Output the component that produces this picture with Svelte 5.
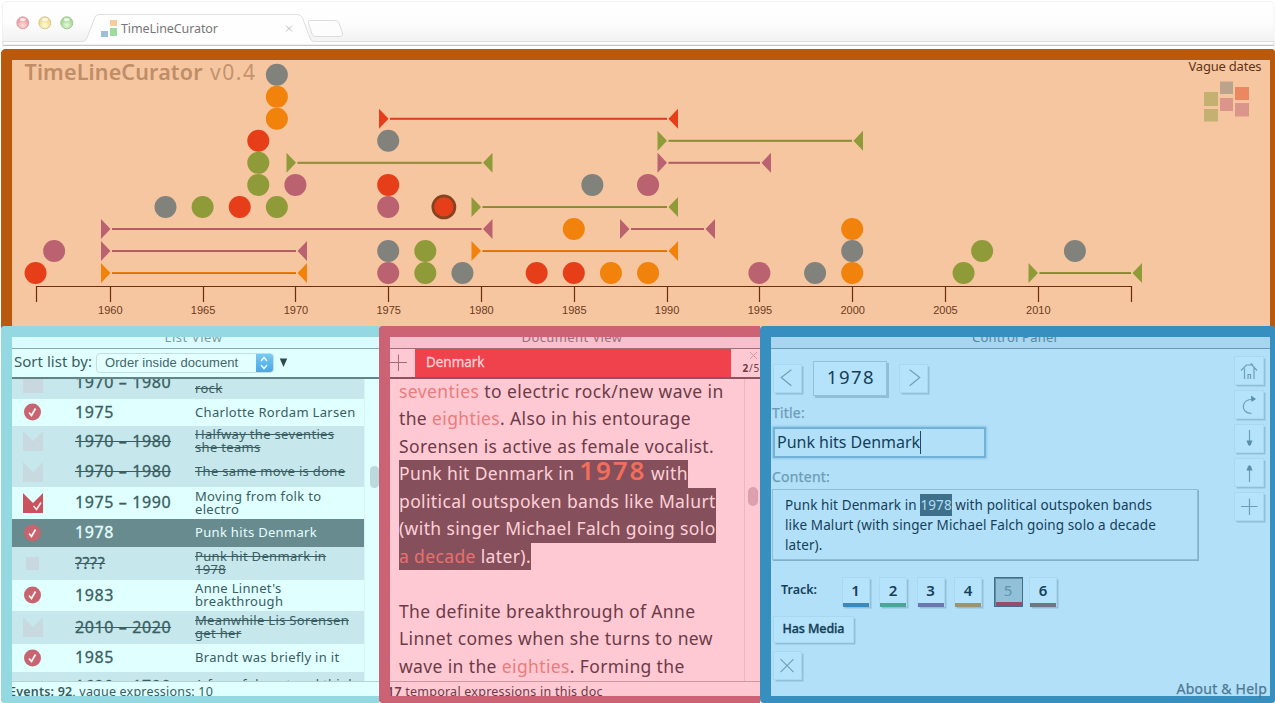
<script>
  const colors = { red: '#e63e19', green: '#8f9a38', gray: '#82827c', mauve: '#bb6270', orange: '#f1820b' };
  const rowY = (r) => 273 - r * 22.03;
  const yearX = (y) => 109.8 + (y - 1960) * 18.56;

  const events = [
    [1956, 0, 'red'], [1975, 0, 'mauve'], [1977, 0, 'green'], [1979, 0, 'gray'], [1983, 0, 'red'],
    [1985, 0, 'red'], [1987, 0, 'orange'], [1989, 0, 'orange'], [1995, 0, 'mauve'], [1998, 0, 'gray'],
    [2000, 0, 'orange'], [2006, 0, 'green'],
    [1957, 1, 'mauve'], [1975, 1, 'gray'], [1977, 1, 'green'], [2000, 1, 'gray'], [2007, 1, 'green'], [2012, 1, 'gray'],
    [1985, 2, 'orange'], [2000, 2, 'orange'],
    [1963, 3, 'gray'], [1965, 3, 'green'], [1967, 3, 'red'], [1969, 3, 'green'], [1975, 3, 'mauve'], [1978, 3, 'red', true],
    [1968, 4, 'green'], [1970, 4, 'mauve'], [1975, 4, 'red'], [1986, 4, 'gray'], [1989, 4, 'mauve'],
    [1968, 5, 'green'],
    [1968, 6, 'red'], [1975, 6, 'gray'],
    [1969, 7, 'orange'], [1969, 8, 'orange'], [1969, 9, 'gray']
  ];
  const spans = [
    [101, 307, 0, 'orange'], [1028.5, 1142, 0, 'green'],
    [101, 307, 1, 'mauve'], [471.5, 678, 1, 'orange'],
    [101, 492.5, 2, 'mauve'], [620, 715, 2, 'mauve'],
    [471.5, 678, 3, 'green'],
    [286.5, 492.5, 5, 'green'], [657.5, 771, 5, 'mauve'],
    [657.5, 863, 6, 'green'],
    [379, 678, 7, 'red']
  ];
  const ticks = [1960, 1965, 1970, 1975, 1980, 1985, 1990, 1995, 2000, 2005, 2010];

  const rows = [
    { h: 20, icon: 'sq', off: true, date: '1970 – 1980', title: ['rock'], first: true },
    { h: 27, icon: 'dot', date: '1975', title: ['Charlotte Rordam Larsen'] },
    { h: 31, icon: 'flag', off: true, date: '1970 – 1980', title: ['Halfway the seventies', 'she teams'] },
    { h: 30, icon: 'flag', off: true, date: '1970 – 1980', title: ['The same move is done'] },
    { h: 32, icon: 'flag', date: '1975 – 1990', title: ['Moving from folk to', 'electro'] },
    { h: 28, icon: 'dot', date: '1978', title: ['Punk hits Denmark'], sel: true },
    { h: 33, icon: 'small', off: true, date: '????', title: ['Punk hit Denmark in', '1978'] },
    { h: 31, icon: 'dot', date: '1983', title: ["Anne Linnet's", 'breakthrough'] },
    { h: 33, icon: 'flag', off: true, date: '2010 – 2020', title: ['Meanwhile Lis Sorensen', 'get her'] },
    { h: 28, icon: 'dot', date: '1985', title: ['Brandt was briefly in it'] },
    { h: 28, icon: 'flag', off: true, date: '1690 – 1790', title: ['A few of desert and think'], last: true }
  ];
  const tracks = ['#3b88b9', '#4ca596', '#6a78ae', '#9b946e', '#964d6d', '#6b7882'];
  const tools = ['home', 'redo', 'down', 'up', 'plus'];
</script>

<div class="page">
  <header class="chrome">
    <svg width="1275" height="49" viewBox="0 0 1275 49">
      <defs>
        <linearGradient id="bar" x1="0" y1="0" x2="0" y2="1"><stop offset="0" stop-color="#fff" /><stop offset=".45" stop-color="#fdfdfd" /><stop offset="1" stop-color="#ededed" /></linearGradient>
        <radialGradient id="r" cy=".7"><stop offset="0" stop-color="#fde3e3" /><stop offset="1" stop-color="#ee9ba0" /></radialGradient>
        <radialGradient id="y" cy=".7"><stop offset="0" stop-color="#fffbd6" /><stop offset="1" stop-color="#eedc91" /></radialGradient>
        <radialGradient id="g" cy=".7"><stop offset="0" stop-color="#e4fadb" /><stop offset="1" stop-color="#a5d893" /></radialGradient>
      </defs>
      <path d="M2.500 49V6Q2.500 1.500 7 1.500H1270Q1274 1.500 1274 6V41H2.500Z" fill="url(#bar)" />
      <path d="M2.500 49V6Q2.500 1.500 7 1.500H1270Q1274 1.500 1274 6V49" fill="none" stroke="#f2f2f2" />
      <path d="M3 41.500H83Q86 41 87 38L95 17Q96 14.500 99 14.500H297Q301 14.500 302.500 18L310 38Q311 41.500 314 41.500H1274V45H3Z" fill="#fefefe" stroke="#dfdfdf" />
      <path d="M3 45.500H1274" stroke="#c6c8ca" />
      <circle cx="22.800" cy="22.800" r="6" fill="url(#r)" stroke="#d9a6a8" />
      <circle cx="44.800" cy="22.800" r="6" fill="url(#y)" stroke="#d3c797" />
      <circle cx="66.800" cy="22.800" r="6" fill="url(#g)" stroke="#a4c898" />
      <g fill="#fff" opacity=".8"><ellipse cx="22.800" cy="19.500" rx="3" ry="1.500" /><ellipse cx="44.800" cy="19.500" rx="3" ry="1.500" /><ellipse cx="66.800" cy="19.500" rx="3" ry="1.500" /></g>
      <path fill="#f5cc9d" d="M110 20h7v6h-7z" /><path fill="#9ddc9f" d="M110 28h7v8h-7z" /><path fill="#9dc0d4" d="M101 31h7v6h-7z" />
      <text x="121" y="33" class="tabtext" textLength="97">TimeLineCurator</text>
      <path d="M286 25.500l6 6M292 25.500l-6 6" stroke="#bdbdbd" />
      <path d="M310 20.500H335Q338 20.500 339 23L342.500 33Q343 36.500 340 36.500H316Q313 36.500 312 34L308.500 23Q308 20.500 310 20.500Z" fill="#fdfdfd" stroke="#dcdcdc" />
    </svg>
  </header>

  <section class="timeline">
    <svg width="1258" height="266" viewBox="12 60 1258 266">
      <text x="24.500" y="80" class="brand" textLength="178">TimeLineCurator</text>
      <text x="210" y="80" class="version" textLength="45">v0.4</text>
      <text x="1188.500" y="71" class="vague" textLength="73">Vague dates</text>
      <g>
        <path fill="#c4b071" d="M1204 92h14v14h-14zM1204 109h14v12.500h-14z" />
        <path fill="#bca48c" d="M1220 81.500h13v12.500h-13z" />
        <path fill="#eb8861" d="M1235 87h14v13h-14z" />
        <path fill="#dc958a" d="M1220 98h13v13h-13zM1235 103h14v13.500h-14z" />
      </g>
      <path d="M36.500 302V286.500H1131.500V302" class="axis" />
      {#each ticks as t}
        <path d="M{Math.round(yearX(t)) + 0.5} 286V302" class="axis" />
        <text x={yearX(t) + 0.5} y="314" class="tick" text-anchor="middle">{t}</text>
      {/each}
      {#each spans as [a, b, r, c]}
        <path d="M{a + 11} {rowY(r)}H{b - 11}" stroke={colors[c]} stroke-width="2" />
        <path d="M{a + 11} {rowY(r) + 0.3}H{b - 11}" stroke="#8f5138" stroke-width="1" opacity=".4" />
        <path d="M{a} {rowY(r) - 10}L{a + 9.500} {rowY(r)}L{a} {rowY(r) + 10}ZM{b} {rowY(r) - 10}L{b - 9.500} {rowY(r)}L{b} {rowY(r) + 10}Z" fill={colors[c]} />
      {/each}
      {#each events as [y, r, c, sel]}
        <circle cx={yearX(y)} cy={rowY(r)} r="11" fill={colors[c]} stroke={sel ? '#864321' : 'none'} stroke-width="2.800" />
      {/each}
    </svg>
  </section>

  <main>
    <section class="panel list">
      <h2><span>List View</span></h2>
      <div class="sort">
        <label for="order">Sort list by:</label>
        <button id="order" class="select"><span>Order inside document</span><i><svg width="16" height="20" viewBox="0 0 16 20"><path d="M5 8l3-3.500L11 8M5 12l3 3.500L11 12" fill="none" stroke="#e8faff" stroke-width="1.500" /></svg></i></button>
        <svg class="dir" width="9" height="10" viewBox="0 0 9 10"><path d="M.8 .5h7.400L4.500 9z" fill="#2b4a4e" /></svg>
      </div>
      <div class="scroll">
        <div class="rows">
          {#each rows as row}
            <div class="row" class:off={row.off} class:sel={row.sel} class:first={row.first} class:last={row.last} style:height="{row.h}px">
              <svg width="22" height="22" viewBox="0 0 22 22">
                {#if row.icon === 'dot'}
                  <circle cx="10.500" cy="11" r="8.500" fill="#c8646f" />
                  <path d="M7 11.500l2.500 3 4-7" fill="none" stroke="#f5f4f4" stroke-width="1.800" />
                {:else if row.icon === 'flag'}
                  <path d="M1 1L11 11L21 1V21H1Z" fill={row.off ? '#c8dadf' : '#c9525c'} />
                  {#if !row.off}<path d="M11.500 14l3 3.500 4.500-7" fill="none" stroke="#fbeeee" stroke-width="1.600" />{/if}
                {:else if row.icon === 'small'}
                  <path d="M4 5h13v13H4z" fill="#c8d8de" />
                {:else}
                  <path d="M1 1h20v21H1z" fill="#c8d8de" />
                {/if}
              </svg>
              <span class="date">{row.date}</span>
              <span class="title">{#each row.title as t}<span>{t}</span>{/each}</span>
            </div>
          {/each}
        </div>
        <div class="track"><i></i></div>
      </div>
      <footer><b>Events: 92</b>, vague expressions: 10</footer>
    </section>

    <section class="panel doc">
      <h2><span>Document View</span></h2>
      <div class="search">
        <div class="add"><svg width="25" height="28" viewBox="0 0 25 28"><path d="M0 13.500H17M8.500 5.500V22" stroke="#a56876" /></svg></div>
        <div class="term">Denmark</div>
        <div class="count"><svg width="9" height="9" viewBox="0 0 9 9"><path d="M1 1l7 7M8 1L1 8" stroke="#dc9497" /></svg><span><b>2</b>/5</span></div>
      </div>
      <div class="scroll">
        <div class="text">
          <p><em>seventies</em> to electric rock/new wave in</p>
          <p>the <em>eighties</em>. Also in his entourage</p>
          <p>Sorensen is active as female vocalist.</p>
          <p class="hl">Punk hit Denmark in <strong>1978</strong> with</p>
          <p class="hl">political outspoken bands like Malurt</p>
          <p class="hl">(with singer Michael Falch going solo</p>
          <p class="hl"><em>a decade</em> later).</p>
          <p>&nbsp;</p>
          <p>The definite breakthrough of Anne</p>
          <p>Linnet comes when she turns to new</p>
          <p>wave in the <em>eighties</em>. Forming the</p>
        </div>
        <div class="track"><i></i></div>
      </div>
      <footer><b>17</b> temporal expressions in this doc</footer>
    </section>

    <section class="panel control">
      <h2><span>Control Panel</span></h2>
      <div class="body">
        <div class="form">
          <div class="nav">
            <button class="key"><svg width="27" height="27" viewBox="0 0 28 28"><path d="M18 5L7.500 13L18 21.500" /></svg></button>
            <button class="key year">1978</button>
            <button class="key next"><svg width="27" height="27" viewBox="0 0 28 28"><path d="M10 5L20.500 13L10 21.500" /></svg></button>
          </div>
          <div class="label">Title:</div>
          <div class="input"><span>Punk hits Denmark</span><i></i></div>
          <div class="label second">Content:</div>
          <div class="content">
            <span>Punk hit Denmark in <mark>1978</mark> with political outspoken bands</span>
            <span>like Malurt (with singer Michael Falch going solo a decade</span>
            <span>later).</span>
          </div>
          <div class="tracks">
            <b>Track:</b>
            {#each tracks as c, i}
              <button class="key num" class:on={i === 4} style:--c={c}>{i + 1}</button>
            {/each}
          </div>
          <button class="key media">Has Media</button>
          <button class="key del"><svg width="26" height="26" viewBox="0 0 28 28"><path d="M6 6.500L20 20.500M20 6.500L6 20.500" /></svg></button>
        </div>
        <div class="tools">
          {#each tools as t}
            <button class="key">
              <svg width="27" height="27" viewBox="0 0 27 27">
                {#if t === 'home'}
                  <path d="M5 13.500L10.500 8H16L21 13.500M8.500 11.500V22M18 9.500V22M14.500 6.500l2.500 1.500M12 22V17.500H14.500V22" />
                {:else if t === 'redo'}
                  <path d="M15.500 22.500C9 22 6.500 18 7.500 14C8.500 10.500 11.500 8.500 16 8.500" stroke-width="1.400" /><path d="M15 4.500L20 8L15.500 11Z" class="head" />
                {:else if t === 'down'}
                  <path d="M13.500 5V18" /><path d="M10.500 15.500h6l-1.500 4-1.500 1.500-1.500-1.500z" class="head" />
                {:else if t === 'up'}
                  <path d="M13.500 9V23" /><path d="M10.500 11.500h6l-1.500-4-1.500-1.500-1.500 1.500z" class="head" />
                {:else}
                  <path d="M5 13.500H21.500M13.500 5.500V22" />
                {/if}
              </svg>
            </button>
          {/each}
        </div>
      </div>
      <a class="about" href="#help">About &amp; Help</a>
    </section>
  </main>
</div>

<style>
  :global(body) { background: #fff; overflow: hidden; }
  * { box-sizing: border-box; }
  .page { width: 1275px; height: 703px; display: flex; flex-direction: column; overflow: hidden; font-family: "Noto Sans", "Open Sans", sans-serif; background: #fff; }
  svg { display: block; flex: none; overflow: visible; }
  .chrome { height: 49px; }
  .tabtext { font-size: 12.500px; fill: #777; }
  .timeline { height: 280px; margin-left: 1px; border: solid #b8590d; border-width: 11px 5px 0 11px; border-radius: 5px 4px 0 0; background: #f6c6a0; flex: none; margin-bottom: -3px; }
  .brand { font-size: 21.500px; font-weight: 600; fill: #bf8d67; }
  .version { font-size: 21px; fill: #c39370; }
  .vague { font-size: 13px; fill: #613318; }
  .axis { fill: none; stroke: #6b2e10; stroke-width: 1.200; }
  .tick { font-family: "Liberation Sans", sans-serif; font-size: 11px; fill: #6d3a1d; }

  main { display: grid; grid-template-columns: 378px 381px 515px; margin-left: 1px; height: 377px; position: relative; }
  .panel { border: 11px solid; border-bottom-width: 7px; border-right: 0; display: flex; flex-direction: column; overflow: hidden; min-width: 0; border-radius: 4px 0 0 4px; }
  .list { background: #e0ffff; border-color: #94d8e1; color: #395d61; }
  .doc { background: #ffc9d3; border-color: #cc6374; color: #6c3b48; }
  .control { background: #b2e0f9; border-color: #368fbf; border-right: 5px solid #368fbf; color: #153f59; border-radius: 4px 3px 3px 4px; }
  h2 { margin: 0; height: 12px; flex: none; overflow: hidden; font-size: 13px; font-weight: 400; letter-spacing: .55px; border-bottom: 1px solid; display: flex; justify-content: center; }
  h2 span { margin-top: -9px; line-height: 18px; height: 18px; }
  .list h2 { background: #dafcff; color: #7b9da2; border-color: #88a9ad; padding-right: 4px; }
  .doc h2 { background: #f6c0cc; color: #9d6c7a; border-color: #a46d7b; padding-right: 6px; letter-spacing: .4px; }
  .control h2 { background: #a8d5ef; color: #5688a4; border-color: #6b98b2; padding-right: 12px; letter-spacing: .2px; }

  .sort { height: 30px; flex: none; display: flex; align-items: center; padding: 0 0 1px 2px; border-bottom: 2px solid #628489; font-size: 15px; }
  .sort label { width: 82px; letter-spacing: .02px; white-space: nowrap; padding-bottom: 3px; }
  .select { width: 178px; height: 20px; padding: 0 0 0 8px; border: 1px solid #c0e0e4; border-radius: 4px; background: #e3ffff; font: 13px "Liberation Sans", sans-serif; color: #42666a; display: flex; align-items: center; justify-content: space-between; letter-spacing: .08px; white-space: nowrap; overflow: hidden; }
  .select i { width: 17px; height: 20px; background: linear-gradient(#7bccf3, #45a5e8); flex: none; }
  .dir { margin-left: 5px; }
  .scroll { flex: 1; min-height: 0; display: flex; overflow: hidden; }
  .rows { width: 352px; flex: none; }
  .row { display: flex; align-items: center; padding: 0 0 1px 10px; }
  .row.off { background: #c6e7eb; }
  .row.sel { background: #688b8f; color: #e6ffff; }
  .row.first { align-items: flex-end; overflow: hidden; padding-bottom: 0; }
  .row.first svg { margin-bottom: 6px; }
  .date { width: 120px; margin-left: 31px; font-size: 16px; letter-spacing: .6px; line-height: 20px; -webkit-text-stroke: .3px; padding-bottom: 1px; }
  .title { font-size: 13px; line-height: 13px; letter-spacing: .32px; display: flex; flex-direction: column; align-items: flex-start; white-space: nowrap; }
  .off .date, .off .title span { text-decoration: line-through; }
  .row.first .date { margin-bottom: 6px; text-decoration: none; }
  .row.first .title { margin-bottom: 4px; }
  .row.last { align-items: flex-start; }
  .row.last .date { margin-top: 4px; }
  .row.last .title { margin-top: 6px; }
  .row.last svg { margin-top: 6px; }
  .list .track { flex: 1; border-left: 1px solid #d5f4f6; display: flex; justify-content: flex-end; }
  .list .track i { width: 9px; height: 22px; border-radius: 5px; background: #bcdade; margin: 87px 0 0; }
  footer { height: 15px; flex: none; border-top: 1px solid #b3d3d7; font-size: 12.500px; line-height: 20px; overflow: hidden; white-space: nowrap; letter-spacing: .2px; margin-left: -3px; }
  footer b { font-weight: 600; }
  .doc footer { border-color: #cf95a2; letter-spacing: .24px; }

  .search { height: 30px; flex: none; border-bottom: 2px solid #8d5361; display: flex; }
  .add { width: 25px; }
  .term { width: 316px; background: #ef424c; color: #ffd0d7; font-size: 13.500px; line-height: 26px; padding-left: 11px; letter-spacing: -.05px; -webkit-text-stroke: .3px; }
  .count { flex: 1; display: flex; flex-direction: column; align-items: flex-end; padding-top: 2px; }
  .count svg { margin-right: 2px; }
  .count span { font-size: 10px; line-height: 17px; letter-spacing: .8px; }
  .text { width: 354px; padding-left: 9px; flex: none; margin-top: -1.500px; font-size: 17.500px; }
  .text p { margin: 0; width: max-content; height: 27.500px; line-height: 27.500px; letter-spacing: .37px; white-space: nowrap; }
  .text p:first-child { letter-spacing: .42px; }
  .text em { font-style: normal; color: #ea7c7b; }
  .text .hl { background: #85505b; color: #ffd0d8; }
  .text .hl em { color: #e8706d; }
  .text strong { font-size: 26px; font-weight: 600; line-height: 20px; color: #f26d5c; letter-spacing: 1.800px; }
  .doc .track { flex: 1; border-left: 1px solid #efb5c1; }
  .doc .track i { display: block; width: 10px; height: 19px; border-radius: 5px; background: #dda0ae; margin: 108px 0 0 3px; }

  .body { display: flex; justify-content: space-between; flex: 1; min-height: 0; }
  .form { width: 428px; display: flex; flex-direction: column; align-items: flex-start; padding: 11px 0 0 1px; }
  .key { font: inherit; color: inherit; padding: 0; width: 29px; height: 29px; border: 1px solid #a9d8f0; box-shadow: 2px 2px 0 -.5px #8fbfd9; background: #b5e3fb; display: flex; align-items: center; justify-content: center; flex: none; }
  .key path { fill: none; stroke: #6c9fb9; stroke-width: 1.200; }
  .key .head { fill: #588fac; stroke: none; }
  .nav { display: flex; gap: 11px; align-items: center; padding-left: 1px; height: 36px; }
  .next { margin-left: 1px; }
  .year { width: 74px; height: 35px; font-size: 18.500px; letter-spacing: 1.500px; padding: 0 0 3px 2px; border-color: #92c2db; box-shadow: 2px 2px 0 #8fbfd9; }
  .label { color: #6d9cb7; font-size: 14px; line-height: 18px; height: 30px; padding-top: 8px; letter-spacing: .2px; -webkit-text-stroke: .25px; }
  .input { width: 213px; height: 31px; margin-left: 1px; border: 2px solid #73b2d8; box-shadow: 0 0 2px 1px #91c6e4; display: flex; align-items: center; font-size: 16px; padding: 0 0 1px 2px; white-space: nowrap; letter-spacing: -.02px; margin-top: 1px; }
  .input i { width: 1px; height: 23px; background: #24465f; }
  .second { height: 31px; padding-top: 10px; }
  .content { width: 426px; height: 71px; border: 1px solid #8fbdd6; box-shadow: 1px 1px 0 #83b0c9; padding: 5px 0 0 12px; display: flex; flex-direction: column; font-size: 13.500px; line-height: 20px; white-space: nowrap; letter-spacing: .1px; }
  .content mark { background: #3e708b; color: #b0def6; padding: 2px 0; }
  .tracks { display: flex; margin-top: 17px; padding-left: 9px; height: 31px; gap: 9.500px; align-items: flex-start; }
  .tracks b { width: 51px; font-size: 12.500px; font-weight: 600; line-height: 26px; }
  .num { width: 28px; height: 30px; font-size: 15px; font-weight: 600; padding-bottom: 5px; background: linear-gradient(#b5e3fb 25px, var(--c) 25px); border-bottom: 0; }
  .num.on { border: 1px solid #416e89; color: #5f93ae; font-weight: 400; background: linear-gradient(#91c0d9 24px, var(--c) 24px); margin: 0 -3px 0 2px; width: 29px; box-shadow: inset 1px 1px #5f8fa9; }
  .media { width: 81px; height: 27px; font-size: 12.500px; font-weight: 500; -webkit-text-stroke: .35px; margin: 8px 0 0 1px; letter-spacing: -.1px; padding-bottom: 2px; }
  .del { margin: 8px 0 0 1px; }
  .tools { display: flex; flex-direction: column; gap: 5px; padding: 7px 6px 0 0; }
  .tools .key { width: 30px; }
  .about { position: absolute; right: 8px; bottom: 4px; color: #4d7892; font-size: 14px; text-decoration: none; line-height: 20px; letter-spacing: .22px; -webkit-text-stroke: .25px; }
</style>
